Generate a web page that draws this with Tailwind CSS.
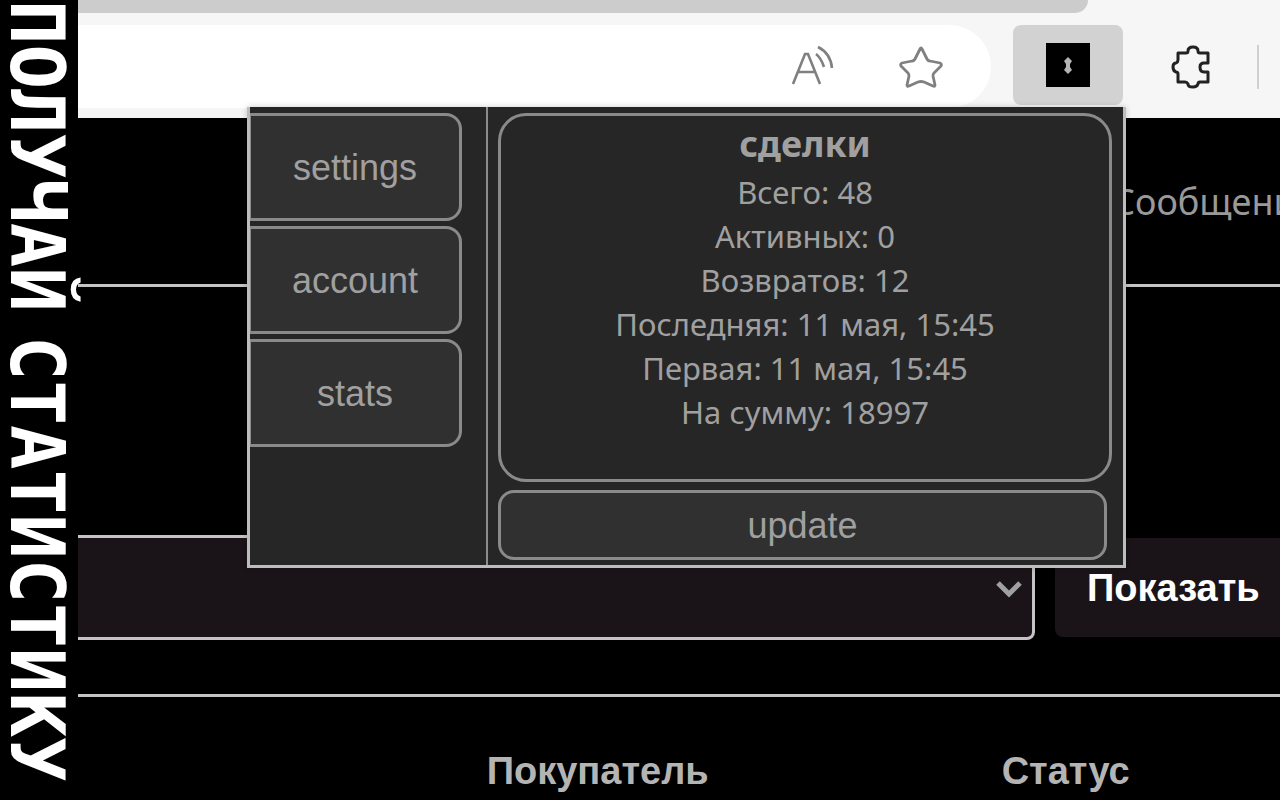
<!DOCTYPE html>
<html lang="ru">
<head>
  <meta charset="UTF-8">
  <title>Статистика</title>
  <script src="https://cdn.jsdelivr.net/npm/@tailwindcss/browser@4"></script>
</head>
<body class="flex h-screen overflow-hidden bg-black font-['Liberation_Sans',sans-serif]">

  <!-- Vertical banner -->
  <aside class="relative z-20 w-[78px] shrink-0 bg-black text-white">
    <h1 class="flex gap-6 [writing-mode:vertical-rl] whitespace-nowrap font-['DejaVu_Sans_Mono',monospace] font-bold text-[74px] leading-[74px]">
      <span>ПОЛУЧАЙ</span>
      <span>СТАТИСТИКУ</span>
    </h1>
  </aside>

  <div class="flex-1 min-w-0 flex flex-col">

    <!-- Browser chrome -->
    <header class="bg-[#f6f6f6]">
      <div class="h-[13px] mr-48 rounded-br-[20px] bg-[#cccccc]"></div>

      <div class="flex items-start pt-3 h-[105px]">
        <div class="flex-1 h-[83px] flex items-center justify-end gap-16 pr-12 rounded-r-[42px] bg-white text-[#808080]">
          <button aria-label="Read aloud">
            <svg class="w-11 h-11" viewBox="0 0 44 44" fill="none" stroke="currentColor" stroke-width="2.6">
              <path d="M2 39 L14 9 H17 L29 39 M6 27 H25"/>
              <path d="M25 9 C29 12 31 16 33 22 M27 2 C35 6 40 13 41 23"/>
            </svg>
          </button>
          <button aria-label="Add to favourites">
            <svg class="w-11 h-11" viewBox="0 0 44 44" fill="none" stroke="currentColor" stroke-width="2.8" stroke-linejoin="round">
              <path d="M21 4 Q22 2 23 4 L28 14 Q29 16 31 16 L41 18 Q43 19 42 21 L35 28 Q34 29 34 31 L36 40 Q36 42 34 41 L25 37 Q22 36 19 37 L10 41 Q8 42 8 40 L10 31 Q10 29 9 28 L2 21 Q1 19 3 18 L13 16 Q15 16 16 14 Z"/>
            </svg>
          </button>
        </div>

        <div class="relative z-10 ml-[22px]">
          <button aria-label="Extension" class="w-[110px] h-20 flex items-center justify-center rounded-lg bg-[#d2d2d2]">
            <svg class="w-11 h-11" viewBox="0 0 44 44">
              <rect width="44" height="44" fill="#000"/>
              <path d="M22 14 L26 18 L24 21 V24 L26 27 L22 31 L18 27 L20 24 V21 L18 18 Z" fill="#b4b4b4"/>
            </svg>
          </button>

          <!-- Extension popup -->
          <div class="absolute top-[82px] -right-[3px] w-[879px] h-[461px] flex border-x-[3px] border-b-[3px] border-[#bdbdbd] bg-[#262626] text-[#a0a0a0] shadow-[0_0_6px_rgba(0,0,0,0.2)]">
            <nav class="w-[238px] shrink-0 flex flex-col items-start gap-[5px] pt-1.5 pr-6 border-r-2 border-[#8c8c8c] text-4xl">
              <button class="w-full h-[108px] pt-0.5 rounded-r-2xl border-[3px] border-l border-[#8a8a8a] bg-[#303030]">settings</button>
              <button class="w-full h-[108px] pt-0.5 rounded-r-2xl border-[3px] border-l border-[#8a8a8a] bg-[#303030]">account</button>
              <button class="w-full h-[108px] pt-0.5 rounded-r-2xl border-[3px] border-l border-[#8a8a8a] bg-[#303030]">stats</button>
            </nav>
            <section class="flex-1 flex flex-col gap-2 pt-1.5 pb-[5px] pl-[10px] pr-[11px]">
              <div class="flex-1 pt-1.5 rounded-[28px] border-[3px] border-[#8a8a8a] text-center font-['Noto_Sans',sans-serif] text-[31px] leading-[44px]">
                <h2 class="font-bold text-4xl leading-[44px] pb-1">сделки</h2>
                <p>Всего: 48</p>
                <p>Активных: 0</p>
                <p>Возвратов: 12</p>
                <p>Последняя: 11 мая, 15:45</p>
                <p>Первая: 11 мая, 15:45</p>
                <p>На сумму: 18997</p>
              </div>
              <button class="h-[70px] pt-0.5 mr-[5px] rounded-2xl border-[3px] border-[#8a8a8a] bg-[#303030] text-4xl">update</button>
            </section>
          </div>
        </div>

        <button aria-label="Extensions" class="ml-12 mt-5 text-[#222]">
          <svg class="w-10 h-11" viewBox="0 0 40 44" fill="none" stroke="currentColor" stroke-width="3" stroke-linejoin="round">
            <path d="M7 8 H15 Q17 8 17 6 Q17 2 22 2 Q27 2 27 6 Q27 8 29 8 H37 V18 H33 Q29 18 29 22 Q29 27 33 27 H37 V37 H29 Q27 37 27 39 Q26 42 22 42 Q17 42 17 39 Q16 37 14 37 H7 V29 Q7 27 5 27 Q2 26 2 22 Q2 18 5 18 Q7 17 7 15 Z"/>
          </svg>
        </button>
        <div class="ml-[46px] mr-[21px] mt-5 w-[2px] h-11 bg-[#d0d0d0]"></div>
      </div>
    </header>

    <!-- Page under the popup -->
    <main class="flex-1 bg-black">
      <nav class="h-[169px] pt-[60px] flex justify-end overflow-hidden border-b-[3px] border-[#c4c4c4]">
        <a href="#" class="w-[168px] whitespace-nowrap font-['Noto_Sans',sans-serif] text-4xl leading-[48px] text-[#999999]">Сообщения</a>
      </nav>

      <form class="mt-[248px] flex items-center gap-5">
        <div class="relative flex-1">
          <select aria-label="Фильтр" class="block w-full h-[105px] appearance-none rounded-r-lg border-y-[3px] border-r-[3px] border-[#c4c4c4] bg-[#1a1418] text-white">
            <option></option>
          </select>
          <svg class="absolute right-3 top-11 w-7 h-5 pointer-events-none" viewBox="0 0 28 20" fill="none" stroke="#a0a0a0" stroke-width="5">
            <path d="M3 4 L14 15 L25 4"/>
          </svg>
        </div>
        <button type="button" class="w-[225px] h-[99px] pt-0.5 pl-8 text-left rounded-l-lg bg-[#1a1418] text-white text-[38px] font-bold">Показать</button>
      </form>

      <table class="mt-[54px] w-full table-fixed border-t-[3px] border-[#c4c4c4] text-left text-[38px] text-[#b4b4b4]">
        <thead>
          <tr>
            <th class="w-[34%]"></th>
            <th class="pt-[46px] font-bold w-[515px]">Покупатель</th>
            <th class="pt-[46px] font-bold">Статус</th>
          </tr>
        </thead>
      </table>
    </main>
  </div>

</body>
</html>
